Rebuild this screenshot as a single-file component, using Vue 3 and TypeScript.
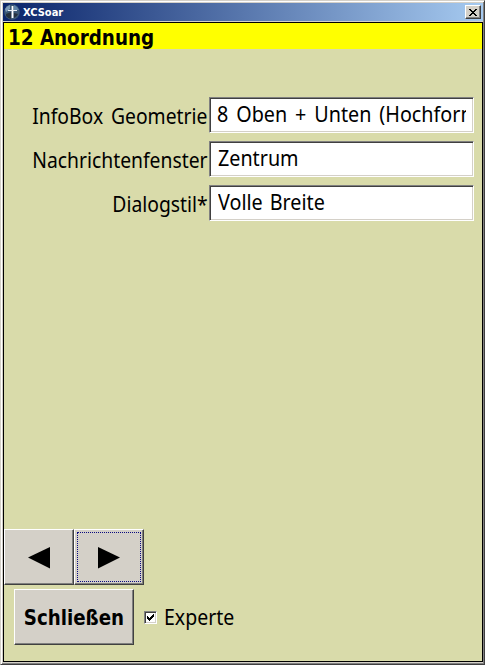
<script setup lang="ts">
import { ref } from 'vue'

interface Field { label: string; value: string; kind: string }

const fields: Field[] = [
  { label: 'InfoBox Geometrie', value: '8 Oben + Unten (Hochform', kind: 'geometry' },
  { label: 'Nachrichtenfenster', value: 'Zentrum', kind: 'messages' },
  { label: 'Dialogstil*', value: 'Volle Breite', kind: 'dialog' },
]
const expert = ref(true)
</script>

<template>
  <div class="window">
    <header class="titlebar">
      <svg class="logo" width="16" height="16" viewBox="0 0 16 16">
        <circle cx="8" cy="8" r="7.8" fill="#3c5876" />
        <path d="M1 5A8 8 0 0 1 6 1L6 5L2 8Z" fill="#7d9ab8" />
        <path d="M10 1A8 8 0 0 1 15 6L10 6Z" fill="#5f83a8" />
        <path d="M2 10L7 8V15A8 8 0 0 1 2 12ZM10 9L14 10A8 8 0 0 1 10 14Z" fill="#26313d" />
        <path d="M8.5 2V14" stroke="#fff" stroke-width="1.8" />
        <path d="M4 6.5H13" stroke="#e8eef4" stroke-width="1" />
      </svg>
      <span class="app-name">XCSoar</span>
      <button class="close-window" aria-label="Schließen">
        <svg width="8" height="7" viewBox="0 0 8 7" shape-rendering="crispEdges">
          <path d="M0 0h2v1h1v1h2V1h1V0h2v1H7v1H6v1H5v1h1v1h1v1h1v1H6V6H5V5H3v1H2v1H0V6h1V5h1V4h1V3H2V2H1V1H0z" />
        </svg>
      </button>
    </header>
    <main class="client">
      <h1><span>12 Anordnung</span></h1>
      <div class="fields">
        <div v-for="f in fields" :key="f.label" class="row" :class="f.kind">
          <span class="label"><span class="label-text">{{ f.label }}</span></span>
          <div class="edit"><div class="clip"><span class="value">{{ f.value }}</span></div></div>
        </div>
      </div>
      <nav class="pager">
        <button class="btn page"><svg width="22" height="22" viewBox="0 0 22 22"><path d="M0 10.5L22 0V21.5Z" /></svg></button>
        <button class="btn page focused"><svg width="22" height="22" viewBox="0 0 22 22"><path d="M22 10.5L0 0V21.5Z" /></svg></button>
      </nav>
      <footer class="footer">
        <button class="btn close"><span>Schließen</span></button>
        <div class="check" @click="expert = !expert">
          <span class="box">
            <svg v-if="expert" width="7" height="7" viewBox="0 0 7 7" shape-rendering="crispEdges">
              <path d="M0 2h1v1h1v1h1V3h1V2h1V1h1V0h1v3H6v1H5v1H4v1H3v1H2V6H1V5H0z" />
            </svg>
          </span>
          <span class="check-text">Experte</span>
        </div>
      </footer>
    </main>
  </div>
</template>

<style>
body { background: #d4d0c8; overflow: hidden; }
</style>

<style scoped>
* { box-sizing: border-box; }
.window {
  width: 485px; height: 665px; padding: 2px 0 1px 2px;
  background: #d4d0c8; display: flex; flex-direction: column;
  border: 1px solid; border-color: #d4d0c8 #404040 #404040 #d4d0c8;
  box-shadow: inset 1px 1px #fff, inset -1px -1px #808080;
  font-family: "Noto Sans", "DejaVu Sans", sans-serif; color: #000;
}
button { font: inherit; color: inherit; padding: 0; margin: 0; }
.titlebar {
  height: 18px; flex: none; margin-right: 1px; padding: 0 2px 0 1px; display: flex; align-items: center;
  background: linear-gradient(90deg, #0a246a, #a6caf0);
}
.logo { flex: none; }
.app-name {
  margin-left: 3px; padding-top: 2px; flex: 1; color: #fff;
  font-family: "DejaVu Sans Condensed", "DejaVu Sans", sans-serif;
  font-stretch: condensed; font-size: 11px; font-weight: 700; line-height: 16px;
}
.close-window {
  width: 16px; height: 14px; background: #d4d0c8; display: flex; align-items: center; justify-content: center;
  border: 1px solid; border-color: #fff #404040 #404040 #fff; box-shadow: inset -1px -1px #808080;
}
.client {
  flex: 1; margin: 1px 1px 1px 0; border: 1px solid #000; background: #d9dbaa;
  display: flex; flex-direction: column; min-height: 0;
}
h1 {
  margin: 0; height: 26px; flex: none; background: #ff0; padding-left: 4px;
  font-family: "DejaVu Sans Condensed", "DejaVu Sans", sans-serif; font-stretch: condensed;
  font-size: 21px; line-height: 30px; font-weight: 700;
}
h1 span { display: inline-block; transform-origin: 0 50%; transform: scaleX(.97); }
.fields { margin-top: 48px; display: flex; flex-direction: column; gap: 8px; flex: 1; }
.row { display: flex; height: 36px; font-size: 21px; white-space: nowrap; }
.label { width: 205px; padding-right: 1px; text-align: right; line-height: 38px; }
.geometry .label { padding-right: 2px; }
.label-text, .value, .check-text { display: inline-block; }
.label-text { transform-origin: 100% 50%; transform: scaleX(.92); word-spacing: 3px; }
.value { transform-origin: 0 50%; transform: scaleX(.94); word-spacing: 2px; margin-left: 1px; }
.geometry .value { word-spacing: 3px; margin-left: 0; }
.edit {
  width: 265px; height: 36px; padding: 0 7px; background: #fff;
  border: 1px solid; border-color: #808080 #fff #fff #808080;
  box-shadow: inset 1px 1px #404040, inset -1px -1px #d4d0c8;
}
.clip { overflow: hidden; height: 34px; line-height: 33px; }
.pager { display: flex; flex: none; }
.btn {
  background: #d4d0c8; height: 56px; display: flex; align-items: center; justify-content: center;
  border: 1px solid; border-color: #fff #404040 #404040 #fff; box-shadow: inset -1px -1px #808080;
}
.page { width: 70px; padding-top: 2px; }
.focused { outline: 1px dotted #0a0a80; outline-offset: -4px; }
.footer { display: flex; flex: none; height: 76px; padding: 4px 0 0 10px; }
.close {
  width: 120px; padding-top: 2px; font-family: "DejaVu Sans Condensed", "DejaVu Sans", sans-serif; font-stretch: condensed;
  font-size: 21px; font-weight: 700;
}
.close span { display: inline-block; transform: scaleX(.965); }
.check { display: flex; height: 56px; align-items: center; margin-left: 10px; font-size: 21px; }
.box {
  width: 13px; height: 13px; background: #fff; display: flex; align-items: center; justify-content: center;
  border: 1px solid; border-color: #808080 #fff #fff #808080;
  box-shadow: inset 1px 1px #404040, inset -1px -1px #d4d0c8;
}
.check-text { margin-left: 7px; transform-origin: 0 50%; transform: scaleX(.93); }
</style>
